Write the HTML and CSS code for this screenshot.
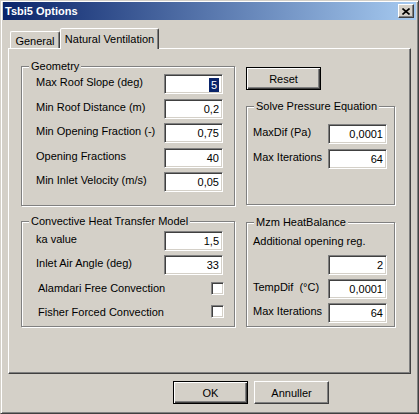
FILE: index.html
```html
<!DOCTYPE html>
<html>
<head>
<meta charset="utf-8">
<title>Tsbi5 Options</title>
<link rel="stylesheet" href="styles.css">
</head>
<body>
<div class="window">
  <div class="titlebar">
    <span class="title">Tsbi5 Options</span>
    <span class="close"><svg width="8" height="7" viewBox="0 0 8 7"><path d="M0.5 0.5 L7.5 6.5 M7.5 0.5 L0.5 6.5" stroke="#000" stroke-width="1.6" fill="none"/></svg></span>
  </div>
  <div class="tabs">
    <div class="tab">General</div>
    <div class="tab active">Natural Ventilation</div>
  </div>
  <div class="panel">
    <div class="col left">
      <div class="group geometry">
        <span class="legend">Geometry</span>
        <div class="row"><span class="label">Max Roof Slope (deg)</span><span class="field"><span class="sel">5</span></span></div>
        <div class="row"><span class="label">Min Roof Distance (m)</span><span class="field">0,2</span></div>
        <div class="row"><span class="label">Min Opening Fraction (-)</span><span class="field">0,75</span></div>
        <div class="row"><span class="label">Opening Fractions</span><span class="field">40</span></div>
        <div class="row"><span class="label">Min Inlet Velocity (m/s)</span><span class="field">0,05</span></div>
      </div>
      <div class="group convective">
        <span class="legend">Convective Heat Transfer Model</span>
        <div class="row"><span class="label">ka value</span><span class="field">1,5</span></div>
        <div class="row"><span class="label">Inlet Air Angle (deg)</span><span class="field">33</span></div>
        <div class="row check"><span class="clabel">Alamdari Free Convection</span><span class="checkbox"></span></div>
        <div class="row check"><span class="clabel">Fisher Forced Convection</span><span class="checkbox"></span></div>
      </div>
    </div>
    <div class="col right">
      <button class="btn default reset">Reset</button>
      <div class="group solve">
        <span class="legend">Solve Pressure Equation</span>
        <div class="row"><span class="label">MaxDif (Pa)</span><span class="field">0,0001</span></div>
        <div class="row"><span class="label">Max Iterations</span><span class="field">64</span></div>
      </div>
      <div class="group mzm">
        <span class="legend">Mzm HeatBalance</span>
        <div class="note">Additional opening reg.</div>
        <div class="row"><span class="label"></span><span class="field">2</span></div>
        <div class="row"><span class="label">TempDif&nbsp; (°C)</span><span class="field">0,0001</span></div>
        <div class="row"><span class="label">Max Iterations</span><span class="field">64</span></div>
      </div>
    </div>
  </div>
  <div class="buttons">
    <button class="btn default">OK</button>
    <button class="btn">Annuller</button>
  </div>
</div>
</body>
</html>
```

FILE: styles.css
```css
* { box-sizing: border-box; }

body {
  margin: 0;
  background: #D4D0C8;
  font-family: "Liberation Sans", Arial, sans-serif;
  font-size: 11px;
  color: #000;
}

.window {
  width: 419px;
  height: 414px;
  background: #D4D0C8;
  border: 1px solid;
  border-color: #D4D0C8 #404040 #404040 #D4D0C8;
  box-shadow: inset 1px 1px 0 #fff, inset -1px -1px 0 #808080;
  padding: 1px 2px 2px 2px;
}

.titlebar {
  height: 18px;
  background: linear-gradient(to right, #0A246A, #A6CAF0);
  display: flex;
  align-items: center;
  justify-content: space-between;
  padding: 0 2px 0 2px;
}

.title {
  color: #fff;
  font-weight: bold;
  font-size: 11px;
}

.close {
  width: 16px;
  height: 14px;
  background: #D4D0C8;
  border: 1px solid;
  border-color: #fff #404040 #404040 #fff;
  box-shadow: inset -1px -1px 0 #808080;
  display: flex;
  align-items: center;
  justify-content: center;
}

.close svg { display: block; margin-left: -1px; }

.tabs {
  display: flex;
  align-items: flex-end;
  height: 20px;
  margin: 8px 5px 0 5px;
  padding-left: 2px;
}

.tab {
  width: 50px;
  height: 17px;
  border: 1px solid;
  border-bottom: none;
  border-color: #fff #404040 transparent #fff;
  border-radius: 2px 2px 0 0;
  box-shadow: inset -1px 0 0 #808080;
  display: flex;
  align-items: center;
  justify-content: center;
  padding-top: 2px;
}

.tab.active {
  width: 99px;
  height: 21px;
  margin-bottom: -1px;
  position: relative;
  z-index: 1;
  background: #D4D0C8;
  padding-top: 0;
}

.panel {
  margin: 0 5px;
  height: 326px;
  border: 1px solid;
  border-color: #fff #404040 #404040 #fff;
  box-shadow: inset -1px -1px 0 #808080;
  padding: 17px 0 0 12px;
  display: flex;
  gap: 11px;
}

.col { display: flex; flex-direction: column; }
.col.left { width: 214px; gap: 15px; }
.col.right { width: 149px; }

.group {
  position: relative;
  border: 1px solid #808080;
  box-shadow: inset 1px 1px 0 #fff, 1px 1px 0 #fff;
  display: flex;
  flex-direction: column;
}

.legend {
  position: absolute;
  top: -7px;
  left: 7px;
  padding: 0 2px;
  background: #D4D0C8;
  line-height: 13px;
  white-space: nowrap;
}

.row {
  display: flex;
  justify-content: space-between;
  align-items: center;
  height: 20px;
  flex: none;
}

.label {
  margin-bottom: 4px;
  white-space: nowrap;
}

.field {
  width: 59px;
  height: 20px;
  background: #fff;
  border: 1px solid;
  border-color: #808080 #fff #fff #808080;
  box-shadow: inset 1px 1px 0 #404040, inset -1px -1px 0 #D4D0C8;
  text-align: right;
  padding-right: 3px;
  line-height: 18px;
  white-space: nowrap;
}

.sel {
  display: inline-block;
  background: #0A246A;
  color: #fff;
  line-height: 14px;
  padding: 0 2px;
  vertical-align: middle;
}

.geometry {
  height: 140px;
  padding: 7px 11px 0 14px;
  gap: 4.5px;
}

.convective {
  height: 106px;
  padding: 9px 11px 0 14px;
  gap: 3.5px;
}

.clabel {
  padding-left: 2px;
  white-space: nowrap;
}

.checkbox {
  width: 13px;
  height: 13px;
  margin-right: -1px;
  background: #fff;
  border: 1px solid;
  border-color: #808080 #fff #fff #808080;
  box-shadow: inset 1px 1px 0 #404040, inset -1px -1px 0 #D4D0C8;
}

.btn {
  width: 75px;
  height: 23px;
  background: #D4D0C8;
  border: 1px solid;
  border-color: #fff #404040 #404040 #fff;
  box-shadow: inset -1px -1px 0 #808080;
  font-family: inherit;
  font-size: 11px;
  color: #000;
  padding: 0;
}

.btn.default {
  border-color: #000;
  box-shadow: inset 1px 1px 0 #fff, inset -1px -1px 0 #404040, inset -2px -2px 0 #808080;
}

.reset {
  margin-top: 1px;
  flex: none;
}

.solve {
  margin-top: 16px;
  height: 99px;
  padding: 17px 7px 0 6px;
  gap: 5px;
}

.mzm {
  margin-top: 17px;
  height: 105px;
  padding: 10px 7px 0 6px;
  gap: 4px;
}

.note {
  height: 16px;
  line-height: 16px;
  margin-bottom: 2px;
  white-space: nowrap;
}

.buttons {
  display: flex;
  gap: 6px;
  margin-top: 7px;
  padding-left: 170px;
}
```
